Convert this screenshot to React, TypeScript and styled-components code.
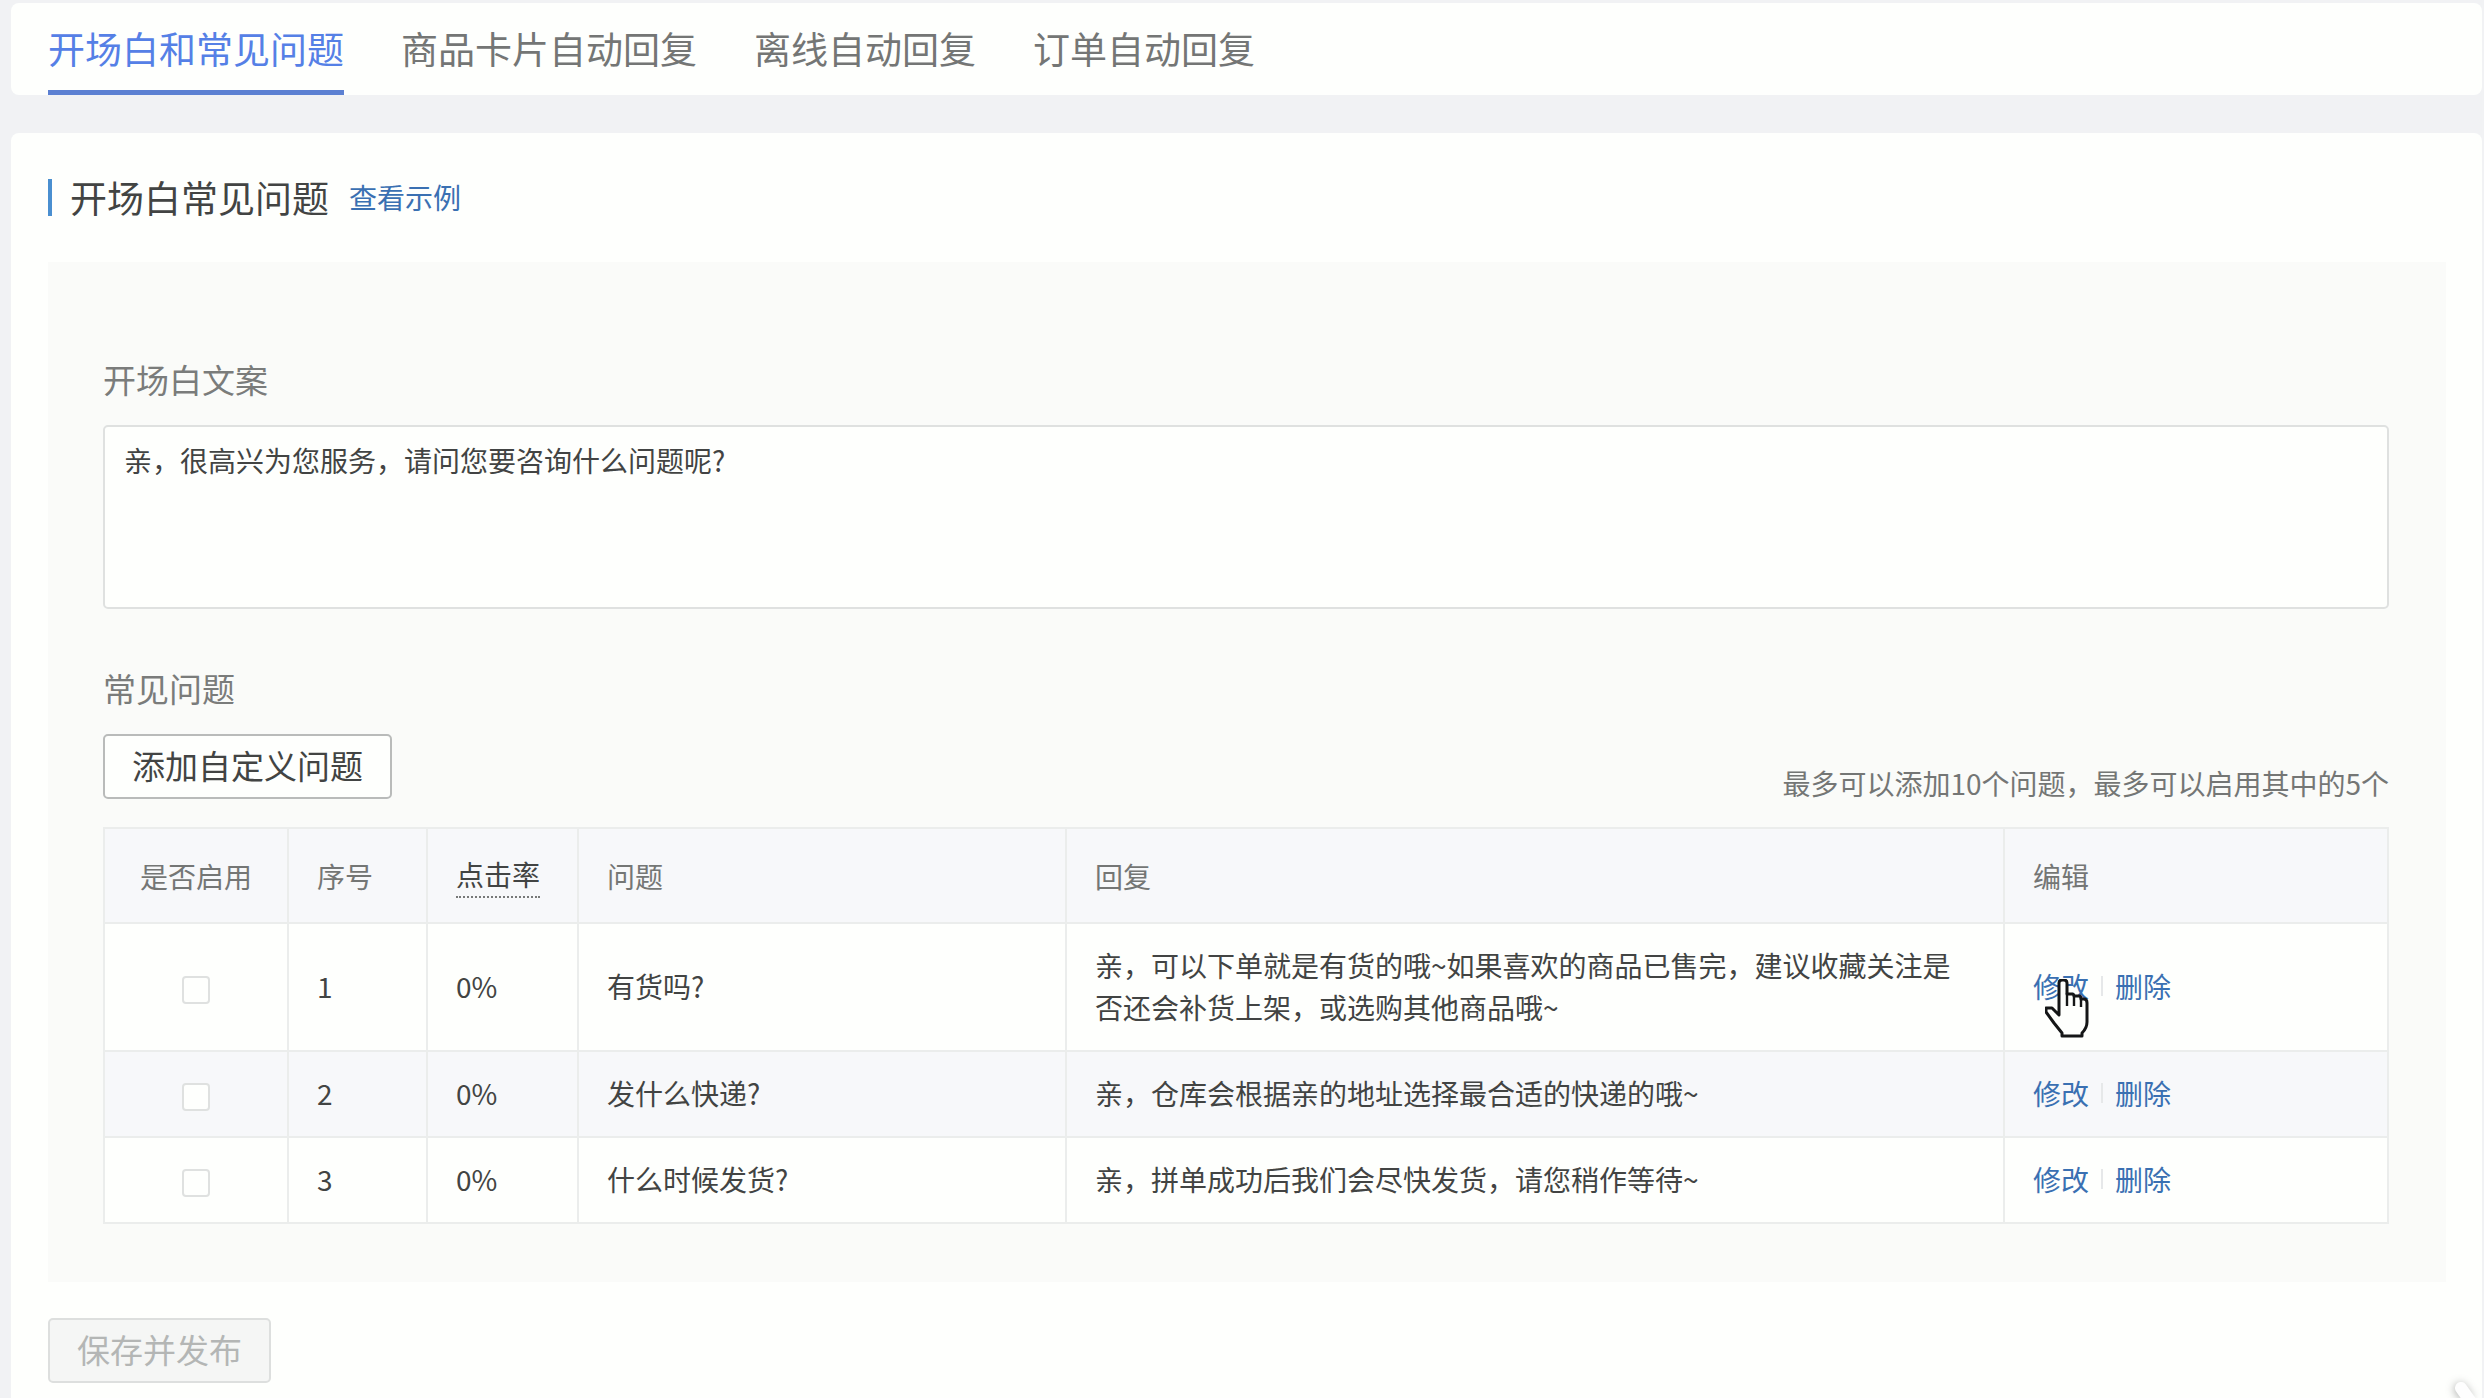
import React, { useState } from 'react';
import styled, { createGlobalStyle } from 'styled-components';

const GlobalStyle = createGlobalStyle`
  * { box-sizing: border-box; }
  body {
    margin: 0;
    background: #f1f2f4;
    color: #424443;
    font-family: "Noto Sans CJK SC", "Liberation Sans", sans-serif;
    font-size: 28px;
    line-height: 42px;
  }
  button, input, textarea { font: inherit; margin: 0; }
`;

const Page = styled.div`
  display: flex;
  flex-direction: column;
  gap: 38px;
  min-height: 100vh;
  padding: 3px 2px 0 11px;
`;

const TabBar = styled.nav`
  display: flex;
  gap: 57px;
  height: 92px;
  padding: 0 37px;
  border-radius: 8px;
  background: #fefffd;
`;

const Tab = styled.button<{ $active: boolean }>`
  padding: 2px 0 0;
  border: 0;
  border-bottom: 5px solid ${(p) => (p.$active ? '#5c80d2' : 'transparent')};
  background: none;
  color: ${(p) => (p.$active ? '#5580e6' : '#747675')};
  font-size: 37px;
  line-height: 42px;
  cursor: pointer;
`;

const Card = styled.main`
  flex: 1;
  padding: 0 36px 16px 37px;
  border-radius: 8px 8px 0 0;
  background: #fefffd;
`;

const CardHeader = styled.header`
  display: flex;
  align-items: center;
  gap: 20px;
  padding: 46px 0;
  line-height: 37px;
`;

const CardTitle = styled.h1`
  margin: 0;
  padding-left: 18px;
  border-left: 4px solid #4a8fd0;
  font-size: 37px;
  font-weight: 400;
  line-height: 37px;
`;

const TextLink = styled.a`
  color: #3a70b2;
  text-decoration: none;
`;

const Panel = styled.section`
  padding: 96px 57px 58px 55px;
  background: #fafbf9;
`;

const FieldLabel = styled.label`
  display: block;
  margin-bottom: 25px;
  color: #7a7c7b;
  font-size: 33px;
`;

const GroupTitle = styled.h2`
  margin: 58px 0 25px;
  color: #7a7c7b;
  font-size: 33px;
  font-weight: 400;
  line-height: 42px;
`;

const Greeting = styled.textarea`
  display: block;
  width: 100%;
  height: 184px;
  padding: 12px 19px;
  border: 2px solid #dfe1e0;
  border-radius: 5px;
  outline: 0;
  background: #fefffd;
  color: #424443;
  resize: none;
`;

const Toolbar = styled.div`
  display: flex;
  align-items: flex-end;
  justify-content: space-between;
  margin-bottom: 28px;
`;

const Button = styled.button`
  height: 65px;
  padding: 0 27px 4px;
  border: 2px solid #b9bbba;
  border-radius: 5px;
  background: #fefffd;
  color: #424443;
  font-size: 33px;
  line-height: 42px;
  cursor: pointer;

  &:disabled {
    border-color: #dddfde;
    background: #f5f6f5;
    color: #b4b6b5;
    cursor: default;
  }
`;

const Hint = styled.span`
  color: #747675;
  line-height: 32px;
`;

const Table = styled.table`
  width: 100%;
  table-layout: fixed;
  border-collapse: collapse;
  border: 2px solid #ebedec;
  background: #fefffd;
`;

const Col = styled.col<{ $width?: number }>`
  width: ${(p) => (p.$width ? `${p.$width}px` : 'auto')};
`;

const Row = styled.tr`
  &:nth-child(even) { background: #f7f8fa; }
`;

const HeadCell = styled.th<{ $center?: boolean }>`
  padding: 24px 28px;
  border: 2px solid #ebedec;
  background: #f7f8fa;
  color: #747675;
  font-weight: 400;
  line-height: 44px;
  text-align: ${(p) => (p.$center ? 'center' : 'left')};
`;

const Cell = styled.td<{ $center?: boolean }>`
  padding: 20px 28px 22px;
  border: 2px solid #ebedec;
  text-align: ${(p) => (p.$center ? 'center' : 'left')};
`;

const Term = styled.abbr`
  display: block;
  width: max-content;
  border-bottom: 2px dotted #777978;
  color: #424443;
  line-height: 43px;
  text-decoration: none;
`;

const Check = styled.input`
  appearance: none;
  width: 28px;
  height: 28px;
  border: 2px solid #dfe1e0;
  border-radius: 4px;
  background: #fefffd;
  vertical-align: middle;

  &:checked { background: #4f7ce6; }
`;

const Actions = styled.div`
  display: flex;
  align-items: center;
`;

const ActionItem = styled.span`
  position: relative;
`;

const Divider = styled.span`
  width: 2px;
  height: 20px;
  margin: 0 12px;
  background: #e6e8e9;
`;

const Pointer = styled.svg`
  position: absolute;
  top: 14px;
  left: 12px;
  width: 44px;
  height: 60px;
  pointer-events: none;
`;

const CornerHandle = styled.svg`
  position: fixed;
  right: 0;
  bottom: 0;
  width: 60px;
  height: 40px;
  filter: drop-shadow(-1px 1px 4px rgba(0, 0, 0, 0.3));
`;

const SaveRow = styled.div`
  display: flex;
  padding-top: 36px;
`;

const tabs = ['开场白和常见问题', '商品卡片自动回复', '离线自动回复', '订单自动回复'];

const questions = [
  {
    id: 1,
    rate: '0%',
    question: '有货吗?',
    reply: '亲，可以下单就是有货的哦~如果喜欢的商品已售完，建议收藏关注是否还会补货上架，或选购其他商品哦~',
  },
  { id: 2, rate: '0%', question: '发什么快递?', reply: '亲，仓库会根据亲的地址选择最合适的快递的哦~' },
  { id: 3, rate: '0%', question: '什么时候发货?', reply: '亲，拼单成功后我们会尽快发货，请您稍作等待~' },
];

function HandPointer() {
  return (
    <Pointer viewBox="0 0 44 60" aria-hidden="true">
      <path
        d="M14 36V4Q14 1 17 1H19Q22 1 22 4V15H27Q29 15 29 17H34Q36 17 36 20H39Q42 20 42 24V43Q42 49 37 54V57H17V54L9 44L1 33V29H7L14 36Z"
        fill="#fefffd"
        stroke="#151617"
        strokeWidth="3"
        strokeLinejoin="round"
      />
      <path d="M22 14V27M29 17V27M36 19V28" fill="none" stroke="#151617" strokeWidth="2.4" />
    </Pointer>
  );
}

export default function App() {
  const [activeTab, setActiveTab] = useState(0);

  return (
    <>
      <GlobalStyle />
      <Page>
        <TabBar>
          {tabs.map((name, i) => (
            <Tab key={name} type="button" $active={i === activeTab} onClick={() => setActiveTab(i)}>
              {name}
            </Tab>
          ))}
        </TabBar>
        <Card>
          <CardHeader>
            <CardTitle>开场白常见问题</CardTitle>
            <TextLink href="#example">查看示例</TextLink>
          </CardHeader>
          <Panel>
            <FieldLabel htmlFor="greeting">开场白文案</FieldLabel>
            <Greeting
              id="greeting"
              spellCheck={false}
              defaultValue="亲，很高兴为您服务，请问您要咨询什么问题呢?"
            />
            <GroupTitle>常见问题</GroupTitle>
            <Toolbar>
              <Button type="button">添加自定义问题</Button>
              <Hint>最多可以添加10个问题，最多可以启用其中的5个</Hint>
            </Toolbar>
            <Table>
              <colgroup>
                <Col $width={184} />
                <Col $width={139} />
                <Col $width={151} />
                <Col $width={488} />
                <Col />
                <Col $width={384} />
              </colgroup>
              <thead>
                <tr>
                  <HeadCell $center>是否启用</HeadCell>
                  <HeadCell>序号</HeadCell>
                  <HeadCell><Term>点击率</Term></HeadCell>
                  <HeadCell>问题</HeadCell>
                  <HeadCell>回复</HeadCell>
                  <HeadCell>编辑</HeadCell>
                </tr>
              </thead>
              <tbody>
                {questions.map((q, i) => (
                  <Row key={q.id}>
                    <Cell $center>
                      <Check type="checkbox" aria-label={`启用问题 ${q.id}`} />
                    </Cell>
                    <Cell>{q.id}</Cell>
                    <Cell>{q.rate}</Cell>
                    <Cell>{q.question}</Cell>
                    <Cell>{q.reply}</Cell>
                    <Cell>
                      <Actions>
                        <ActionItem>
                          <TextLink href="#edit">修改</TextLink>
                          {i === 0 && <HandPointer />}
                        </ActionItem>
                        <Divider />
                        <TextLink href="#delete">删除</TextLink>
                      </Actions>
                    </Cell>
                  </Row>
                ))}
              </tbody>
            </Table>
          </Panel>
          <SaveRow>
            <Button type="button" disabled>保存并发布</Button>
          </SaveRow>
        </Card>
        <CornerHandle viewBox="0 0 60 40" aria-hidden="true">
          <path d="M37 30L54 54" fill="none" stroke="#fefefe" strokeWidth="12" strokeLinecap="round" />
        </CornerHandle>
      </Page>
    </>
  );
}
